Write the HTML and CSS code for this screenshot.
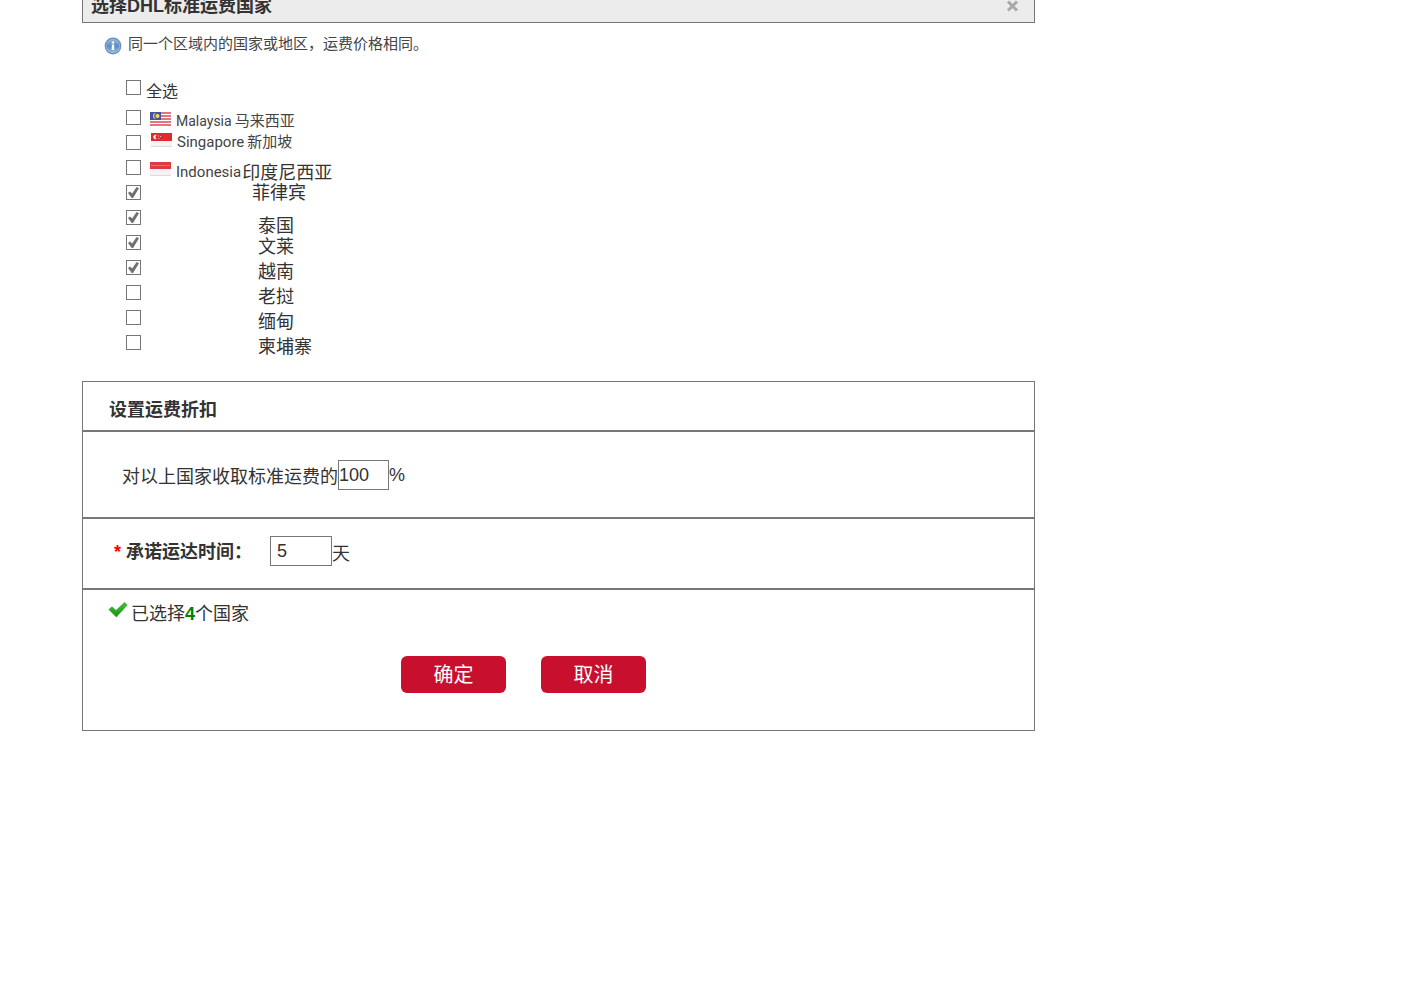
FILE: index.html
```html
<!DOCTYPE html>
<html lang="zh-CN">
<head>
<meta charset="utf-8">
<title>选择DHL标准运费国家</title>
<link rel="stylesheet" href="styles.css">
</head>
<body>
<main class="dialog">
  <header class="dialog-head">
    <h1 class="dialog-title">选择DHL标准运费国家</h1>
    <button class="close" type="button" aria-label="关闭">
      <svg width="13" height="12" viewBox="0 0 13 12"><path d="M2 1.5 11 10.5M11 1.5 2 10.5" stroke="#a9a9a9" stroke-width="3"/></svg>
    </button>
  </header>

  <section class="countries">
    <p class="hint">
      <svg width="18" height="18" viewBox="0 0 18 18">
        <defs><linearGradient id="blue" x1="0" y1="0" x2="0" y2="1"><stop offset="0" stop-color="#8eb2da"/><stop offset=".5" stop-color="#5b8bc4"/><stop offset="1" stop-color="#8fbbe4"/></linearGradient></defs>
        <circle cx="9" cy="9" r="8.4" fill="#6f8fbd"/>
        <circle cx="9" cy="9" r="7" fill="#a3bddf"/>
        <circle cx="9" cy="9" r="6.3" fill="url(#blue)"/>
        <path d="M7.8 4.6h2.4v2H7.8zM7.8 7.6h2.4v5.4H7.8z" fill="#fff"/>
      </svg>
      <span>同一个区域内的国家或地区，运费价格相同。</span>
    </p>

    <div class="row row-all"><input class="tick" type="checkbox" id="all"><label class="all low" for="all">全选</label></div>

    <div class="row"><input class="tick" type="checkbox" id="my"><label class="flagged" for="my">
      <svg class="flag" width="21" height="14" viewBox="0 0 21 14">
        <path fill="#fff" d="M0 0h21v14H0z"/><path d="M0 1h21M0 4h21M0 7h21M0 10h21M0 13h21" stroke="#dc4a50" stroke-width="1.6"/>
        <path fill="#4450a2" d="M0 0h11v8H0z"/><path d="M6 1a3 3 0 1 0 0 6 3.4 3.4 0 0 1 0-6z" fill="#f5dc50"/><circle cx="7.5" cy="4" r="2" fill="#f5dc50"/>
      </svg><span class="name"><span class="small">Malaysia</span><span>马来西亚</span></span></label></div>
    <div class="row"><input class="tick" type="checkbox" id="sg"><label class="flagged high" for="sg">
      <svg class="flag" width="21" height="14" viewBox="0 0 21 14">
        <path fill="#f4f2f2" d="M0 0h21v14H0z"/><path fill="#e12a30" d="M0 0h21v8H0z"/>
        <path d="M5.5 2a2.2 2.2 0 1 0 0 4 2.7 2.7 0 0 1 0-4z" fill="#fff"/><path d="M7 2.5h1v1H7zM9 3h1v1H9zM7.5 5h1v1h-1z" fill="#fbb"/>
        <path d="M0 13.5h21" stroke="#ddd"/>
      </svg><span class="name"><span>Singapore</span><span>新加坡</span></span></label></div>
    <div class="row"><input class="tick" type="checkbox" id="id"><label class="flagged" for="id">
      <svg class="flag" width="21" height="14" viewBox="0 0 21 14">
        <path fill="#f4f2f2" d="M0 0h21v14H0z"/><path fill="#dc3b42" d="M0 0h21v7H0z"/><path d="M1 3.5h19" stroke="#e56b70"/><path d="M0 13.5h21" stroke="#ddd"/>
      </svg><span class="name tight"><span>Indonesia</span><span class="large">印度尼西亚</span></span></label></div>
    <div class="row"><input class="tick" type="checkbox" id="ph" checked><label class="plain wide" for="ph">菲律宾</label></div>
    <div class="row"><input class="tick" type="checkbox" id="th" checked><label class="plain lower" for="th">泰国</label></div>
    <div class="row"><input class="tick" type="checkbox" id="bn" checked><label class="plain low" for="bn">文莱</label></div>
    <div class="row"><input class="tick" type="checkbox" id="vn" checked><label class="plain low" for="vn">越南</label></div>
    <div class="row"><input class="tick" type="checkbox" id="la"><label class="plain low" for="la">老挝</label></div>
    <div class="row"><input class="tick" type="checkbox" id="mm"><label class="plain low" for="mm">缅甸</label></div>
    <div class="row"><input class="tick" type="checkbox" id="kh"><label class="plain low" for="kh">柬埔寨</label></div>
  </section>

  <section class="panel panel-title"><h2>设置运费折扣</h2></section>

  <section class="panel panel-rate">
    <label class="sunk" for="rate">对以上国家收取标准运费的</label><input class="field rate" id="rate" type="text" value="100"><span>%</span>
  </section>

  <section class="panel panel-time">
    <span class="star">*</span><label class="strong" for="days">承诺运达时间：</label><input class="field days" id="days" type="text" value="5"><span class="unit">天</span>
  </section>

  <section class="panel panel-end">
    <p class="chosen">
      <svg width="20" height="18" viewBox="0 0 20 18">
        <defs><linearGradient id="green" x1="0" y1="0" x2="0" y2="1"><stop offset="0" stop-color="#42c036"/><stop offset="1" stop-color="#169414"/></linearGradient></defs>
        <path d="M.8 7.6 4 4.8 8 8.4 16.4 .4 19.2 3 8.4 15z" fill="url(#green)" stroke="#2a9e27" stroke-width=".6"/>
      </svg>
      <span>已选择<b>4</b>个国家</span>
    </p>
    <div class="actions"><button class="btn" type="button">确定</button><button class="btn" type="button">取消</button></div>
  </section>
</main>
</body>
</html>
```

FILE: styles.css
```css
* { box-sizing: border-box; }

body {
  margin: 0;
  background: #fff;
  color: #333;
  font: 18px/24px "Liberation Sans", "Noto Sans CJK SC", sans-serif;
}

h1, h2, p { margin: 0; }
svg { display: block; flex: none; }

.dialog {
  max-width: 953px;
  margin: -12px 0 0 82px;
}

.dialog-head {
  display: flex;
  align-items: center;
  justify-content: space-between;
  padding: 5px 15px 5px 8px;
  border: 1px solid #777;
  background: #ececec;
}

.dialog-title { padding-top: 2px; font-size: 18px; line-height: 21px; }

.close {
  padding: 0;
  border: 0;
  background: none;
}

.countries { padding: 11px 0 21px 22px; }

.hint {
  display: flex;
  align-items: flex-end;
  gap: 6px;
  color: #444;
  font-size: 15px;
  line-height: 20px;
}

.hint svg { margin-bottom: -1px; }

.row {
  display: flex;
  align-items: flex-start;
  height: 25px;
  padding-left: 22px;
}

.row-all { height: 30px; margin-top: 26px; }

.tick {
  appearance: none;
  flex: none;
  width: 15px;
  height: 15px;
  margin: 0;
  border: 1px solid #767676;
  background: #fff;
}

.tick:checked::before {
  content: "";
  display: block;
  width: 11px;
  height: 11px;
  margin: 1px;
  background: #707070;
  clip-path: polygon(0 55%, 18% 42%, 38% 60%, 78% 0, 100% 12%, 46% 100%, 34% 100%);
}

.row label { line-height: 16px; white-space: nowrap; }
.row .low { margin-top: 4px; }
.row .lower { margin-top: 8px; }

.all { padding-left: 5px; font-size: 16px; }

.flagged {
  display: flex;
  align-items: flex-start;
  gap: 5px;
  margin-top: 2px;
  padding-left: 9px;
  color: #444;
  font: 15px/16px Roboto, "Noto Sans CJK SC", sans-serif;
}

.row .high { margin-top: -2px; padding-left: 10px; }

.name {
  display: flex;
  align-items: baseline;
  gap: 3px;
  padding-top: 1px;
}

.name.tight { align-items: center; gap: 1px; }
.small { font-size: 14px; }
.large { padding-top: 2px; color: #333; font-size: 18px; }

.plain { padding-left: 117px; }
.wide { padding-left: 111px; }

.panel { border: 1px solid #777; }

.panel-title { padding: 16px 26px 8px; }
.panel-title h2 { font-size: 18px; line-height: 24px; }

.panel-rate {
  display: flex;
  align-items: center;
  padding: 28px 39px 27px;
}

.sunk { padding-top: 4px; }

.panel-time {
  display: flex;
  align-items: flex-start;
  padding: 17px 31px 22px;
}

.field {
  height: 30px;
  border: 1px solid #777;
  border-radius: 0;
  background: #fff;
  color: #333;
  font: inherit;
}

.rate { width: 51px; padding: 0; }
.days { width: 62px; padding: 0 6px; }

.star {
  width: 12px;
  padding-top: 4px;
  color: #f00;
  font-weight: bold;
}

.strong { width: 144px; padding-top: 4px; font-weight: bold; }
.unit { padding-top: 6px; }

.panel-end { padding: 12px 25px 37px; }

.chosen {
  display: flex;
  align-items: flex-start;
  gap: 3px;
}

.chosen b { color: #008000; }

.actions {
  display: flex;
  gap: 35px;
  margin-top: 30px;
  padding-left: 293px;
}

.btn {
  width: 105px;
  height: 37px;
  padding: 0;
  border: 0;
  border-radius: 6px;
  background: #c8102e;
  color: #fff;
  font: 20px/24px "Liberation Sans", "Noto Sans CJK SC", sans-serif;
}
```
